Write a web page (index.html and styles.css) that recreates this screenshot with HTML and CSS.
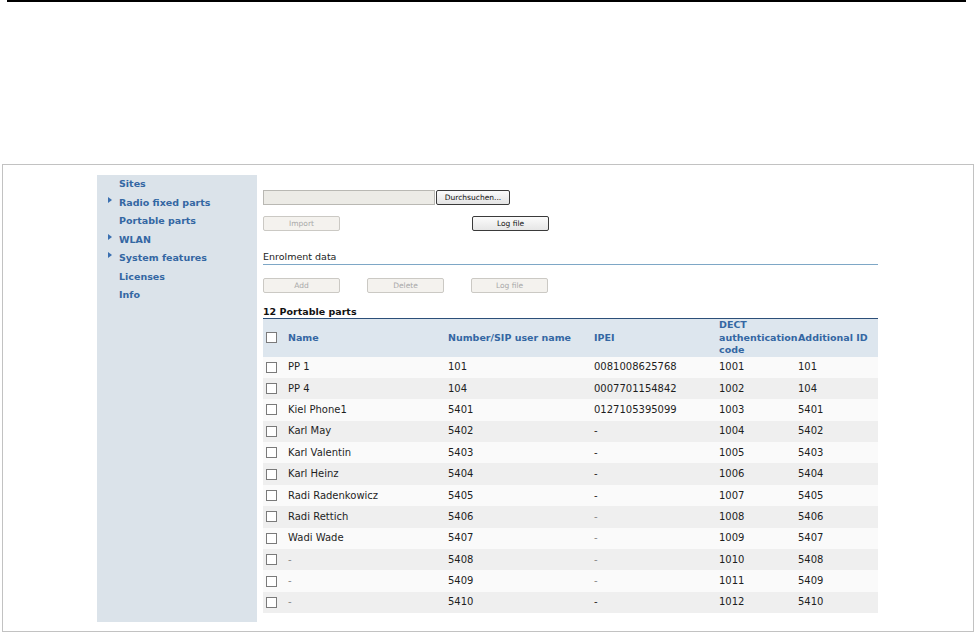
FILE: index.html
```html
<!DOCTYPE html>
<html>
<head>
<meta charset="utf-8">
<link rel="stylesheet" href="styles.css">
</head>
<body>
<div class="topline"></div>
<div class="frame">
  <nav class="sidebar">
    <div class="nav-item"><span class="mark"></span><span>Sites</span></div>
    <div class="nav-item"><span class="mark"><i class="tri"></i></span><span>Radio fixed parts</span></div>
    <div class="nav-item"><span class="mark"></span><span>Portable parts</span></div>
    <div class="nav-item"><span class="mark"><i class="tri"></i></span><span>WLAN</span></div>
    <div class="nav-item"><span class="mark"><i class="tri"></i></span><span>System features</span></div>
    <div class="nav-item"><span class="mark"></span><span>Licenses</span></div>
    <div class="nav-item"><span class="mark"></span><span>Info</span></div>
  </nav>
  <main class="content">
    <div class="file-row">
      <div class="file-field"></div>
      <button class="btn browse">Durchsuchen...</button>
    </div>
    <div class="btn-row first">
      <button class="btn disabled">Import</button>
      <button class="btn enabled logfile">Log file</button>
    </div>
    <div class="section-title">Enrolment data</div>
    <div class="btn-row second">
      <button class="btn disabled">Add</button>
      <button class="btn disabled">Delete</button>
      <button class="btn disabled">Log file</button>
    </div>
    <div class="list-title">12 Portable parts</div>
    <table class="parts">
      <colgroup>
        <col class="c-chk"><col class="c-name"><col class="c-num"><col class="c-ipei"><col class="c-dect"><col class="c-add">
      </colgroup>
      <thead>
        <tr>
          <th><span class="cb"></span></th>
          <th>Name</th>
          <th>Number/SIP user name</th>
          <th>IPEI</th>
          <th>DECT<br>authentication<br>code</th>
          <th>Additional ID</th>
        </tr>
      </thead>
      <tbody>
        <tr><td><span class="cb"></span></td><td>PP 1</td><td>101</td><td>0081008625768</td><td>1001</td><td>101</td></tr>
        <tr><td><span class="cb"></span></td><td>PP 4</td><td>104</td><td>0007701154842</td><td>1002</td><td>104</td></tr>
        <tr><td><span class="cb"></span></td><td>Kiel Phone1</td><td>5401</td><td>0127105395099</td><td>1003</td><td>5401</td></tr>
        <tr><td><span class="cb"></span></td><td>Karl May</td><td>5402</td><td>-</td><td>1004</td><td>5402</td></tr>
        <tr><td><span class="cb"></span></td><td>Karl Valentin</td><td>5403</td><td>-</td><td>1005</td><td>5403</td></tr>
        <tr><td><span class="cb"></span></td><td>Karl Heinz</td><td>5404</td><td>-</td><td>1006</td><td>5404</td></tr>
        <tr><td><span class="cb"></span></td><td>Radi Radenkowicz</td><td>5405</td><td>-</td><td>1007</td><td>5405</td></tr>
        <tr><td><span class="cb"></span></td><td>Radi Rettich</td><td>5406</td><td class="dash">-</td><td>1008</td><td>5406</td></tr>
        <tr><td><span class="cb"></span></td><td>Wadi Wade</td><td>5407</td><td class="dash">-</td><td>1009</td><td>5407</td></tr>
        <tr><td><span class="cb"></span></td><td class="dash">-</td><td>5408</td><td class="dash">-</td><td>1010</td><td>5408</td></tr>
        <tr><td><span class="cb"></span></td><td class="dash">-</td><td>5409</td><td class="dash">-</td><td>1011</td><td>5409</td></tr>
        <tr><td><span class="cb"></span></td><td class="dash">-</td><td>5410</td><td>-</td><td>1012</td><td>5410</td></tr>
      </tbody>
    </table>
  </main>
</div>
</body>
</html>
```
FILE: styles.css
```css
html, body {
  margin: 0;
  padding: 0;
  background: #ffffff;
}
body {
  width: 976px;
  height: 634px;
  overflow: hidden;
  font-family: "DejaVu Sans", Verdana, sans-serif;
  color: #222;
}
.topline {
  margin: 0 10px 0 7px;
  height: 2px;
  background: #000;
}
.frame {
  margin: 162px 0 0 2px;
  border: 1px solid #c2c2c2;
  display: flex;
  align-items: flex-start;
  padding: 10px 0 0 94px;
  box-sizing: content-box;
  width: 876px;
  height: 456px;
}
.sidebar {
  width: 160px;
  height: 447px;
  background: #dbe3ea;
  flex: none;
}
.nav-item {
  display: flex;
  height: 18.5px;
  line-height: 18.5px;
  font-size: 9.5px;
  font-weight: bold;
  color: #3467a3;
  white-space: nowrap;
}
.mark {
  width: 22px;
  flex: none;
}
.tri {
  display: block;
  width: 0;
  height: 0;
  margin: 3px 0 0 11px;
  border-left: 4px solid #3a6fb0;
  border-top: 3px solid transparent;
  border-bottom: 3px solid transparent;
}
.content {
  margin-left: 6px;
  width: 615px;
  padding-top: 15px;
  flex: none;
}
.file-row {
  display: flex;
  height: 15px;
}
.file-field {
  width: 170px;
  height: 13px;
  background: #ecebe6;
  border: 1px solid #b9b8b3;
}
.btn {
  font-family: "DejaVu Sans", Tahoma, sans-serif;
  font-size: 7.5px;
  width: 77px;
  height: 15px;
  padding: 0;
  margin: 0;
  line-height: 13px;
  box-sizing: border-box;
  border-radius: 2px;
}
.browse {
  width: 74px;
  margin-left: 1px;
  background: linear-gradient(#fbfbfb, #e4e4e4);
  border: 1px solid #3a3a3a;
  color: #111;
}
.enabled {
  background: linear-gradient(#fbfbfb, #e6e6e6);
  border: 1px solid #3a3a3a;
  color: #111;
}
.disabled {
  background: #f4f2ee;
  border: 1px solid #cbc9c4;
  color: #a8a8a8;
}
.btn-row {
  display: flex;
  height: 15px;
}
.btn-row.first {
  margin-top: 11px;
}
.btn-row.first .logfile {
  margin-left: 132px;
}
.btn-row.second {
  margin-top: 13px;
  gap: 27px;
}
.section-title {
  margin-top: 20px;
  height: 13px;
  line-height: 12px;
  font-size: 9.5px;
  color: #222;
  border-bottom: 1px solid #7ea7c6;
}
.list-title {
  margin-top: 13px;
  height: 12px;
  line-height: 12px;
  font-size: 9.5px;
  font-weight: bold;
  color: #111;
  border-bottom: 1px solid #2c4f79;
}
.parts {
  width: 615px;
  border-collapse: collapse;
  table-layout: fixed;
  font-size: 9.5px;
}
.c-chk { width: 25px; }
.c-name { width: 160px; }
.c-num { width: 146px; }
.c-ipei { width: 125px; }
.c-dect { width: 79px; }
.c-add { width: 80px; }
.parts th, .parts td {
  padding: 0;
  text-align: left;
  white-space: nowrap;
  vertical-align: middle;
}
.parts thead tr {
  background: #dde6ee;
  height: 37px;
}
.parts th {
  font-weight: bold;
  color: #3467a3;
  line-height: 12.5px;
}
.parts tbody tr {
  height: 21.4px;
}
.parts tbody tr:nth-child(odd) {
  background: #fafafa;
}
.parts tbody tr:nth-child(even) {
  background: #efefef;
}
.parts td {
  color: #1e1e1e;
  font-size: 10px;
  line-height: 12px;
}
.parts td.dash {
  color: #888;
}
.cb {
  display: block;
  width: 9px;
  height: 9px;
  margin-left: 3px;
  border: 1px solid #7a7a7a;
  background: #fff;
}
```
